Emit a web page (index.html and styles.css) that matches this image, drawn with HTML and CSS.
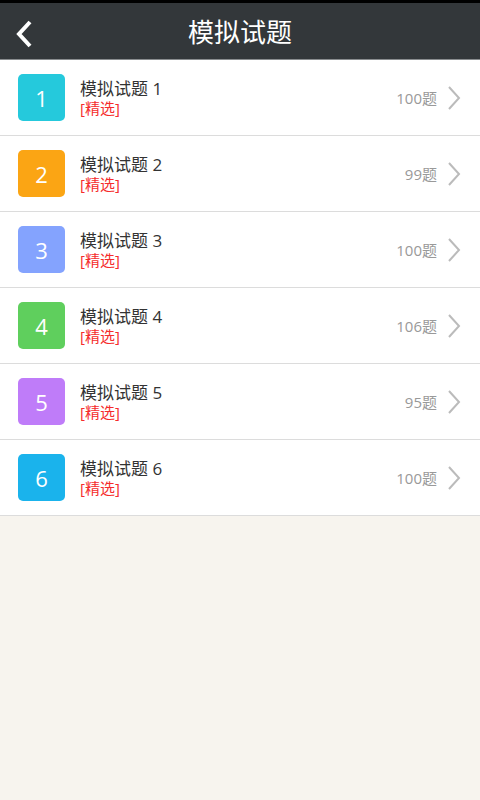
FILE: index.html
```html
<!DOCTYPE html>
<html lang="zh-CN">
<head>
    <meta charset="utf-8">
    <title>模拟试题</title>
    <link rel="stylesheet" href="styles.css">
</head>
<body>
<div class="status"></div>
<div class="header">
    <span class="back">
        <svg width="18" height="28" viewBox="0 0 18 28"><path d="M15 2 L4 14 L15 26" fill="none" stroke="#fff" stroke-width="4"/></svg>
    </span>
    <div class="header-title">模拟试题</div>
</div>
<ul class="list">
    <li class="item">
        <div class="num c1">1</div>
        <div class="info">
            <div class="title">模拟试题 1</div>
            <div class="tag">[精选]</div>
        </div>
        <div class="count">100题</div>
        <svg class="arrow" width="14" height="24" viewBox="0 0 14 24"><path d="M2 1 L12 12 L2 23" fill="none" stroke="#bbb" stroke-width="2"/></svg>
    </li>
    <li class="item">
        <div class="num c2">2</div>
        <div class="info">
            <div class="title">模拟试题 2</div>
            <div class="tag">[精选]</div>
        </div>
        <div class="count">99题</div>
        <svg class="arrow" width="14" height="24" viewBox="0 0 14 24"><path d="M2 1 L12 12 L2 23" fill="none" stroke="#bbb" stroke-width="2"/></svg>
    </li>
    <li class="item">
        <div class="num c3">3</div>
        <div class="info">
            <div class="title">模拟试题 3</div>
            <div class="tag">[精选]</div>
        </div>
        <div class="count">100题</div>
        <svg class="arrow" width="14" height="24" viewBox="0 0 14 24"><path d="M2 1 L12 12 L2 23" fill="none" stroke="#bbb" stroke-width="2"/></svg>
    </li>
    <li class="item">
        <div class="num c4">4</div>
        <div class="info">
            <div class="title">模拟试题 4</div>
            <div class="tag">[精选]</div>
        </div>
        <div class="count">106题</div>
        <svg class="arrow" width="14" height="24" viewBox="0 0 14 24"><path d="M2 1 L12 12 L2 23" fill="none" stroke="#bbb" stroke-width="2"/></svg>
    </li>
    <li class="item">
        <div class="num c5">5</div>
        <div class="info">
            <div class="title">模拟试题 5</div>
            <div class="tag">[精选]</div>
        </div>
        <div class="count">95题</div>
        <svg class="arrow" width="14" height="24" viewBox="0 0 14 24"><path d="M2 1 L12 12 L2 23" fill="none" stroke="#bbb" stroke-width="2"/></svg>
    </li>
    <li class="item">
        <div class="num c6">6</div>
        <div class="info">
            <div class="title">模拟试题 6</div>
            <div class="tag">[精选]</div>
        </div>
        <div class="count">100题</div>
        <svg class="arrow" width="14" height="24" viewBox="0 0 14 24"><path d="M2 1 L12 12 L2 23" fill="none" stroke="#bbb" stroke-width="2"/></svg>
    </li>
</ul>
</body>
</html>
```

FILE: styles.css
```css
html, body {
    margin: 0;
    padding: 0;
    height: 100%;
}
body {
    background: #f7f4ee;
    font-family: "Open Sans", "Noto Sans CJK SC", sans-serif;
}
.status {
    height: 3px;
    background: #000;
}
.header {
    height: 56px;
    background: #33373a;
    border-bottom: 1px solid #8a8d8f;
    display: flex;
    align-items: center;
    justify-content: center;
    position: relative;
}
.back {
    position: absolute;
    left: 15px;
    top: 17px;
}
.header-title {
    color: #fff;
    font-size: 26px;
}
.list {
    list-style: none;
    margin: 0;
    padding: 0;
    background: #fff;
}
.item {
    height: 75px;
    border-bottom: 1px solid #dcdcdc;
    display: flex;
    align-items: center;
    padding: 0 19px 0 18px;
}
.num {
    width: 47px;
    height: 47px;
    border-radius: 5px;
    color: #fff;
    font-size: 22px;
    display: flex;
    align-items: center;
    justify-content: center;
}
.c1 { background: #25c9dc; }
.c2 { background: #fba514; }
.c3 { background: #84a3fe; }
.c4 { background: #5fcf5d; }
.c5 { background: #bf7cf9; }
.c6 { background: #1ab3ec; }
.info {
    flex: 1;
    margin-left: 15px;
    margin-top: -1px;
}
.title {
    font-size: 17px;
    color: #333;
    line-height: 22px;
}
.tag {
    font-size: 15px;
    color: #f52c2c;
    line-height: 17px;
}
.count {
    font-size: 15px;
    color: #999;
    margin-right: 10px;
}
.arrow {
    display: block;
}
```
